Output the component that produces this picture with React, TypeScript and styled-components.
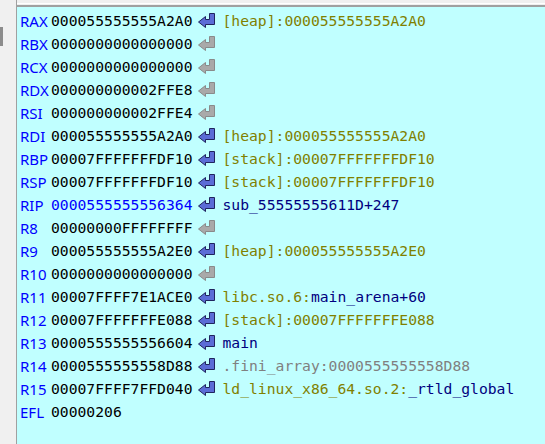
import React from "react";
import styled, { createGlobalStyle } from "styled-components";

const Global = createGlobalStyle`
  html, body { margin: 0; padding: 0; background: #f0f0f0; }
  #root { width: 545px; height: 444px; }
`;

const Root = styled.div`
  display: flex;
  width: 545px;
  height: 444px;
  overflow: hidden;
`;

const Gutter = styled.div`
  width: 16px;
  flex: none;
  background: #f0f0f0;
  padding-top: 27px;
  box-sizing: border-box;
`;

const Thumb = styled.div`
  width: 3px;
  height: 19px;
  background: #8c8c8c;
`;

const Panel = styled.div`
  flex: 1;
  display: flex;
  flex-direction: column;
  border-left: 1px solid #a0a0a0;
`;

const TopEdge = styled.div`
  height: 7px;
  flex: none;
  background: linear-gradient(#f0f0f0 0 3px, #ffffff 3px 4px, #f0f0f0 4px 5px, #a0a0a0 5px 7px);
`;

const List = styled.div`
  flex: 1;
  background: #c0ffff;
  padding: 2px 0 0 3px;
  display: flex;
  flex-direction: column;
`;

const Row = styled.div`
  height: 23px;
  display: flex;
  align-items: center;
  white-space: pre;
`;

const Name = styled.span`
  width: 31px;
  flex: none;
  font-family: "Noto Sans", "Open Sans", sans-serif;
  font-size: 15px;
  color: #0000ff;
`;

const mono = `"DejaVu Sans Mono", "Liberation Mono", monospace`;

const Value = styled.span<{ $code?: boolean }>`
  font-family: ${mono};
  font-size: 14.7px;
  color: ${(p) => (p.$code ? "#0000ff" : "#000000")};
`;

const ArrowBox = styled.svg`
  margin-left: 6px;
  flex: none;
`;

const Comment = styled.span`
  margin-left: 6px;
  font-family: ${mono};
  font-size: 14.7px;
`;

const Part = styled.span<{ $c: string }>`
  color: ${(p) => p.$c};
`;

const Arrow = ({ active }: { active: boolean }) => (
  <ArrowBox width="18" height="15" viewBox="0 0 18 15">
    <path
      d="M11.5 0.5 H16.5 V11.5 H7.5 V14.5 L0.5 9 L7.5 3.5 V6.5 H11.5 Z"
      fill={active ? "#5b6cd6" : "#a9a9a9"}
      stroke={active ? "#20245e" : "#8a8a8a"}
      strokeWidth="1"
      strokeLinejoin="miter"
    />
  </ArrowBox>
);

const OLIVE = "#808000";
const NAVY = "#000080";
const GRAY = "#808080";

type Reg = {
  name: string;
  value: string;
  code?: boolean;
  arrow?: "on" | "off";
  parts?: [string, string][];
};

const regs: Reg[] = [
  { name: "RAX", value: "000055555555A2A0", arrow: "on", parts: [["[heap]:000055555555A2A0", OLIVE]] },
  { name: "RBX", value: "0000000000000000", arrow: "off" },
  { name: "RCX", value: "0000000000000000", arrow: "off" },
  { name: "RDX", value: "000000000002FFE8", arrow: "off" },
  { name: "RSI", value: "000000000002FFE4", arrow: "off" },
  { name: "RDI", value: "000055555555A2A0", arrow: "on", parts: [["[heap]:000055555555A2A0", OLIVE]] },
  { name: "RBP", value: "00007FFFFFFFDF10", arrow: "on", parts: [["[stack]:00007FFFFFFFDF10", OLIVE]] },
  { name: "RSP", value: "00007FFFFFFFDF10", arrow: "on", parts: [["[stack]:00007FFFFFFFDF10", OLIVE]] },
  { name: "RIP", value: "0000555555556364", code: true, arrow: "on", parts: [["sub_55555555611D+247", NAVY]] },
  { name: "R8", value: "00000000FFFFFFFF", arrow: "off" },
  { name: "R9", value: "000055555555A2E0", arrow: "on", parts: [["[heap]:000055555555A2E0", OLIVE]] },
  { name: "R10", value: "0000000000000000", arrow: "off" },
  { name: "R11", value: "00007FFFF7E1ACE0", arrow: "on", parts: [["libc.so.6:", OLIVE], ["main_arena+60", NAVY]] },
  { name: "R12", value: "00007FFFFFFFE088", arrow: "on", parts: [["[stack]:00007FFFFFFFE088", OLIVE]] },
  { name: "R13", value: "0000555555556604", arrow: "on", parts: [["main", NAVY]] },
  { name: "R14", value: "0000555555558D88", arrow: "on", parts: [[".fini_array:0000555555558D88", GRAY]] },
  { name: "R15", value: "00007FFFF7FFD040", arrow: "on", parts: [["ld_linux_x86_64.so.2:", OLIVE], ["_rtld_global", NAVY]] },
  { name: "EFL", value: "00000206" },
];

export default function App() {
  return (
    <>
      <Global />
      <Root>
        <Gutter>
          <Thumb />
        </Gutter>
        <Panel>
          <TopEdge />
          <List>
            {regs.map((r) => (
              <Row key={r.name}>
                <Name>{r.name}</Name>
                <Value $code={r.code}>{r.value}</Value>
                {r.arrow && <Arrow active={r.arrow === "on"} />}
                {r.parts && (
                  <Comment>
                    {r.parts.map(([t, c], i) => (
                      <Part key={i} $c={c}>{t}</Part>
                    ))}
                  </Comment>
                )}
              </Row>
            ))}
          </List>
        </Panel>
      </Root>
    </>
  );
}
